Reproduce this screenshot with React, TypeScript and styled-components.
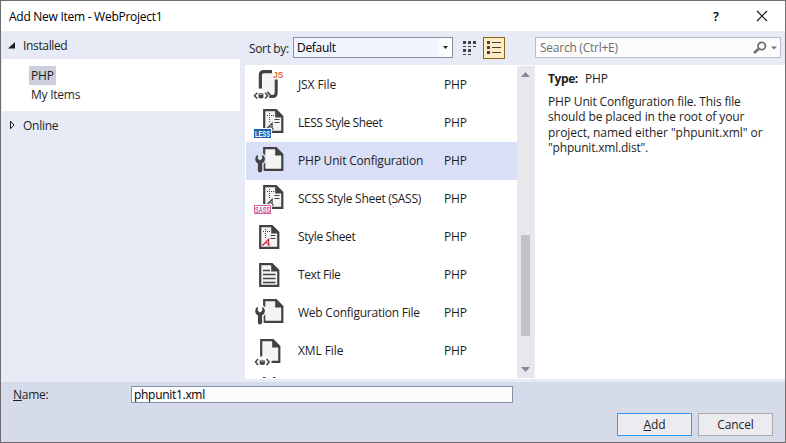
import React from "react";
import styled, { createGlobalStyle } from "styled-components";

const Global = createGlobalStyle`
  * { box-sizing: border-box; }
  body { margin: 0; }
  svg { display: block; flex: none; }
`;

const Dialog = styled.div`
  width: 786px;
  height: 443px;
  display: flex;
  flex-direction: column;
  border: 1px solid #6d6d70;
  background: #e6ebf5;
  color: #1e1e1e;
  font: 12px/15px "Open Sans", "Noto Sans", sans-serif;
  white-space: nowrap;
  overflow: hidden;
`;

const Label = styled.span<{ $track?: number }>`
  letter-spacing: ${(p) => p.$track ?? -0.1}px;
`;

const TitleBar = styled.header`
  height: 30px;
  flex: none;
  display: flex;
  align-items: center;
  justify-content: space-between;
  padding: 0 17px 0 8px;
  background: #fff;
  color: #000;
`;

const WindowActions = styled.div`
  display: flex;
  align-items: center;
  gap: 37px;
`;

const HelpMark = styled.span`
  font-size: 13px;
  font-weight: 600;
`;

const Body = styled.main`
  height: 351px;
  flex: none;
  display: flex;
`;

const Sidebar = styled.nav`
  width: 244px;
  flex: none;
  padding-left: 1px;
`;

const GroupHeader = styled.div`
  height: 28px;
  display: flex;
  align-items: center;
  gap: 8px;
  padding-left: 6px;
`;

const GroupItems = styled.div`
  width: 238px;
  height: 52px;
  display: flex;
  flex-direction: column;
  align-items: flex-start;
  padding: 7px 0 0 27px;
  background: #fff;
`;

const TreeItem = styled.div<{ $selected?: boolean }>`
  height: 19px;
  padding: 2px;
  background: ${(p) => (p.$selected ? "#cccedb" : "transparent")};
`;

const Center = styled.section`
  width: 290px;
  flex: none;
`;

const SortBar = styled.div`
  height: 34px;
  display: flex;
  align-items: flex-start;
  padding: 6px 0 0 4px;
`;

const SortLabel = styled.div`
  width: 44px;
  padding-top: 4px;
`;

const Combo = styled.div`
  width: 160px;
  height: 21px;
  display: flex;
  justify-content: space-between;
  padding-left: 3px;
  line-height: 19px;
  border: 1px solid #8591a2;
  background: #f1f5ff;
  color: #000;
`;

const ComboArrow = styled.div`
  width: 13px;
  display: flex;
  align-items: center;
  justify-content: center;
  background: #fcfcfc;
`;

const ViewButton = styled.div<{ $active?: boolean }>`
  width: 22px;
  height: 22px;
  margin-left: ${(p) => (p.$active ? 2 : 6)}px;
  display: flex;
  align-items: center;
  justify-content: center;
  border: 1px solid ${(p) => (p.$active ? "#8a6414" : "transparent")};
  background: ${(p) => (p.$active ? "#ffecc7" : "transparent")};
`;

const ListPane = styled.div`
  height: 314px;
  display: flex;
  background: #fff;
  border-right: 1px solid #e6ebf5;
`;

const Rows = styled.div`
  width: 272px;
  height: 314px;
  padding: 1px 0 0 1px;
  overflow: hidden;
`;

const Row = styled.div<{ $selected?: boolean }>`
  height: 38px;
  display: grid;
  grid-template-columns: 45px 146px 1fr;
  align-items: center;
  padding-left: 7px;
  background: ${(p) => (p.$selected ? "#dadff8" : "transparent")};

  > span {
    padding-bottom: 2px;
  }
`;

const Scrollbar = styled.div`
  width: 17px;
  height: 312px;
  margin-top: 1px;
  display: flex;
  flex-direction: column;
  align-items: center;
  background: #e8e8ec;
`;

const ScrollArrow = styled.div`
  width: 17px;
  height: 17px;
  flex: none;
  display: flex;
  align-items: center;
  justify-content: center;
`;

const Track = styled.div`
  flex: 1;
  display: flex;
  padding-top: 152px;
`;

const Thumb = styled.div`
  width: 9px;
  height: 101px;
  background: #c2c3c9;
`;

const Details = styled.aside`
  flex: 1;
`;

const SearchRow = styled.div`
  height: 34px;
  padding-top: 6px;
`;

const SearchBox = styled.div`
  width: 246px;
  height: 21px;
  display: flex;
  align-items: center;
  justify-content: space-between;
  padding: 0 3px 0 4px;
  border: 1px solid #b5bccb;
  background: #fcfcfc;
  color: #6d6d6d;
`;

const DetailPane = styled.div`
  height: 314px;
  padding: 6px 0 0 13px;
  background: #fff;
`;

const TypeLine = styled.div`
  height: 23px;
  display: flex;
  gap: 7px;
`;

const Bold = styled.b`
  letter-spacing: -0.4px;
`;

const Description = styled.div`
  line-height: 15.4px;
`;

const Footer = styled.footer`
  flex: 1;
  padding: 4px 12px 0 12px;
  background: #d6dbe9;
`;

const NameRow = styled.div`
  height: 27px;
  display: flex;
  align-items: flex-start;
`;

const NameLabel = styled.label`
  width: 118px;
  padding-top: 1px;
`;

const NameField = styled.div`
  width: 382px;
  height: 17px;
  padding: 0 2px;
  border: 1px solid #8591a9;
  background: #fcfcfc;
  color: #000;
`;

const Buttons = styled.div`
  display: flex;
  justify-content: flex-end;
  gap: 6px;
`;

const Button = styled.button<{ $primary?: boolean }>`
  width: 75px;
  height: 23px;
  padding: 0;
  font: inherit;
  color: #1e1e1e;
  background: #ececf0;
  border: 1px solid ${(p) => (p.$primary ? "#3399ff" : "#acacac")};
`;

const INK = "#424242";

function Page({ x, y, children }: { x: number; y: number; children?: React.ReactNode }) {
  return (
    <g transform={`translate(${x} ${y})`}>
      <path d="M1.2 1.2H13L19.3 7.5V22.8H1.2Z" fill="#f4f4f4" stroke={INK} strokeWidth="2.2" />
      <path d="M12.2 1L20 8.6H12.2Z" fill={INK} />
      {children}
    </g>
  );
}

function StyleMarks({ accent, x = 0 }: { accent: string; x?: number }) {
  return (
    <>
      <path d="M4 6.5H11.5M6.5 4V13" stroke={INK} strokeWidth="1" strokeDasharray="1 1" fill="none" />
      <path d="M11.5 10.5H16.5M11.5 13.5H16.5" stroke={INK} strokeWidth="1.1" />
      <path transform={`translate(${x} 0)`} d="M3 20H5M4 20L9.6 14.2V20M6.3 18H9.6M8.3 20H11.3" stroke={accent} strokeWidth="1.2" fill="none" />
    </>
  );
}

function Wrench({ halo }: { halo: string }) {
  const d = "M2.8 15.8V19.7L5 21.4L7.2 19.7V15.8C9.5 16.8 10.4 19 9.7 21.2C9.3 22.7 8.2 23.7 7.1 24.3V31.5C7.1 34 2.9 34 2.9 31.5V24.3C1.5 23.6.5 22.6.3 21C0 18.7 1 16.7 2.8 15.8Z";
  return (
    <>
      <path d={d} fill={halo} stroke={halo} strokeWidth="3" />
      <path d={d} fill={INK} />
    </>
  );
}

function CodeTag({ y }: { y: number }) {
  return (
    <g transform={`translate(0 ${y})`}>
      <path d="M-1 -2H17.5V9H-1Z" fill="#fff" />
      <path d="M4 .5L1.5 3.5L4 6.5M12.6 .5L15.2 3.5L12.6 6.5" fill="none" stroke={INK} strokeWidth="1.5" />
      <path d="M5.7 2.2Q8.3 .2 10.9 2.2V5.8Q8.3 7.2 5.7 5.8Z" fill={INK} />
      <path d="M6.8 2.5H9.8" stroke="#fff" strokeWidth=".8" />
    </g>
  );
}

function Tag({ width, fill, color, text }: { width: number; fill: string; color: string; text: string }) {
  return (
    <>
      <rect x="0" y="24" width={width + 2} height="11" fill="#fff" />
      <rect x="1" y="25" width={width} height="9" fill={fill} />
      <text x="2" y="32.8" fontFamily="Liberation Sans" fontWeight="bold" fontSize="9" textLength={width - 2} lengthAdjust="spacingAndGlyphs" fill={color}>{text}</text>
    </>
  );
}

type Kind = "jsx" | "less" | "config" | "sass" | "style" | "text" | "xml";

function ItemIcon({ kind, selected }: { kind: Kind; selected?: boolean }) {
  return (
    <svg width="36" height="38" viewBox="0 0 36 38">
      {kind === "jsx" && (
        <>
          <path d="M9.5 7H20V12L22 13V29H16L9.5 23Z" fill="#f5f5f5" />
          <path d="M7.4 22.5V9.2Q7.4 5.7 11 5.7H19" fill="none" stroke={INK} strokeWidth="3.2" />
          <path d="M23.2 13.5V26.5Q23.2 30.6 19.5 30.6H17.5L14 26.2" fill="none" stroke={INK} strokeWidth="3" />
          <text x="20" y="11.7" fontFamily="Liberation Sans" fontWeight="bold" fontSize="9.5" textLength="10.5" lengthAdjust="spacingAndGlyphs" fill="#e86c30">JS</text>
          <g transform="translate(0 26.5)">
            <path d="M4.2 .3L1.5 3.2L4.2 6M12 .3L14.7 3.2L12 6" fill="none" stroke="#fff" strokeWidth="3" />
            <path d="M4.2 .3L1.5 3.2L4.2 6M12 .3L14.7 3.2L12 6" fill="none" stroke={INK} strokeWidth="1.5" />
            <path d="M5.5 1.2Q8 -.4 10.4 1.2V5.2Q8 6.7 5.5 5.2Z" fill={INK} />
            <path d="M6.7 1.8H9.3" stroke="#fff" strokeWidth=".8" />
          </g>
        </>
      )}
      {kind === "less" && (
        <>
          <Page x={10} y={5}><StyleMarks accent={INK} x={-0.5} /></Page>
          <Tag width={17} fill="#1b62ab" color="#fff" text="LESS" />
        </>
      )}
      {kind === "sass" && (
        <>
          <Page x={10} y={5}><StyleMarks accent={INK} x={-0.5} /></Page>
          <Tag width={17} fill="#fff" color="#c2528c" text="SASS" />
          <rect x="1.5" y="25.5" width="16" height="8" fill="none" stroke="#cf649a" strokeWidth="1" />
        </>
      )}
      {kind === "config" && (
        <>
          <Page x={10} y={5} />
          <g transform="translate(2 -3)"><Wrench halo={selected ? "#dadff8" : "#fff"} /></g>
        </>
      )}
      {kind === "style" && <Page x={6} y={7}><StyleMarks accent="#c8283c" /></Page>}
      {kind === "text" && (
        <Page x={6} y={7}>
          <path d="M4 7.5H11M4 11.5H16.5M4 15.5H16.5M4 19.5H16.5" stroke={INK} strokeWidth="1.5" />
        </Page>
      )}
      {kind === "xml" && (
        <>
          <Page x={7} y={7} />
          <g transform="translate(1 0)"><CodeTag y={26.5} /></g>
        </>
      )}
    </svg>
  );
}

const items: { name: string; kind: Kind; track: number; selected?: boolean }[] = [
  { name: "JSX File", kind: "jsx", track: -0.1 },
  { name: "LESS Style Sheet", kind: "less", track: -0.4 },
  { name: "PHP Unit Configuration", kind: "config", track: -0.2, selected: true },
  { name: "SCSS Style Sheet (SASS)", kind: "sass", track: -0.28 },
  { name: "Style Sheet", kind: "style", track: -0.37 },
  { name: "Text File", kind: "text", track: -0.4 },
  { name: "Web Configuration File", kind: "config", track: -0.23 },
  { name: "XML File", kind: "xml", track: -0.1 },
];

export default function App() {
  return (
    <>
      <Global />
      <Dialog>
        <TitleBar>
          <Label $track={-0.27}>Add New Item - WebProject1</Label>
          <WindowActions>
            <HelpMark>?</HelpMark>
            <svg width="12" height="12" viewBox="0 0 12 12"><path d="M1 1L11 11M11 1L1 11" stroke="#111" strokeWidth="1.1" /></svg>
          </WindowActions>
        </TitleBar>
        <Body>
          <Sidebar>
            <GroupHeader>
              <svg width="7" height="7" viewBox="0 0 7 7"><path d="M7 0V6.5H0Z" fill="#1e1e1e" /></svg>
              <Label $track={-0.35}>Installed</Label>
            </GroupHeader>
            <GroupItems>
              <TreeItem $selected><Label>PHP</Label></TreeItem>
              <TreeItem><Label $track={-0.25}>My Items</Label></TreeItem>
            </GroupItems>
            <GroupHeader>
              <svg width="7" height="10" viewBox="0 0 7 10"><path d="M2.5 1.2L6 5L2.5 8.8Z" fill="none" stroke="#1e1e1e" /></svg>
              <Label $track={-0.25}>Online</Label>
            </GroupHeader>
          </Sidebar>
          <Center>
            <SortBar>
              <SortLabel><Label $track={-0.35}>Sort by:</Label></SortLabel>
              <Combo>
                <Label $track={-0.3}>Default</Label>
                <ComboArrow><svg width="5" height="3" viewBox="0 0 5 3"><path d="M0 0H5L2.5 3Z" fill="#1b293e" /></svg></ComboArrow>
              </Combo>
              <ViewButton>
                <svg width="14" height="14" viewBox="0 0 14 14" fill="#424242">
                  <path d="M0 0H3V3H0ZM5 0H8V3H5ZM10 0H13V3H10ZM0 8H3V11H0ZM5 8H8V11H5Z" />
                  <path d="M0 5H3V6H0ZM5 5H8V6H5ZM10 5H13V6H10ZM0 13H3V14H0ZM5 13H8V14H5Z" />
                </svg>
              </ViewButton>
              <ViewButton $active>
                <svg width="14" height="14" viewBox="0 0 14 14" fill="#424242">
                  <path d="M0 0H3V3H0ZM0 5H3V8H0ZM0 10H3V13H0ZM5 1H14V2H5ZM5 6H14V7H5ZM5 11H14V12H5Z" />
                </svg>
              </ViewButton>
            </SortBar>
            <ListPane>
              <Rows>
                {items.map((it) => (
                  <Row key={it.name} $selected={it.selected}>
                    <ItemIcon kind={it.kind} selected={it.selected} />
                    <Label $track={it.track}>{it.name}</Label>
                    <Label>PHP</Label>
                  </Row>
                ))}
                <Row>
                  <svg width="36" height="38" viewBox="0 0 36 38"><path d="M10 7H12.5V8H10ZM20 7H22.5V8H20Z" fill={INK} /></svg>
                </Row>
              </Rows>
              <Scrollbar>
                <ScrollArrow><svg width="9" height="5" viewBox="0 0 9 5"><path d="M0 5L4.5 0L9 5Z" fill="#868999" /></svg></ScrollArrow>
                <Track><Thumb /></Track>
                <ScrollArrow><svg width="9" height="5" viewBox="0 0 9 5"><path d="M0 0L4.5 5L9 0Z" fill="#868999" /></svg></ScrollArrow>
              </Scrollbar>
            </ListPane>
          </Center>
          <Details>
            <SearchRow>
              <SearchBox>
                <Label $track={-0.25}>Search (Ctrl+E)</Label>
                <svg width="24" height="14" viewBox="0 0 24 14">
                  <circle cx="8.7" cy="5" r="3.7" fill="none" stroke="#717171" strokeWidth="1.8" />
                  <path d="M6 7.5L1 12" stroke="#717171" strokeWidth="2.5" />
                  <path d="M18 5.5H24L21 8.5Z" fill="#717171" />
                </svg>
              </SearchBox>
            </SearchRow>
            <DetailPane>
              <TypeLine><Bold>Type:</Bold><Label>PHP</Label></TypeLine>
              <Description>
                <Label $track={-0.15}>PHP Unit Configuration file. This file</Label><br />
                <Label $track={-0.1}>should be placed in the root of your</Label><br />
                <Label $track={-0.05}>project, named either "phpunit.xml" or</Label><br />
                <Label $track={-0.2}>"phpunit.xml.dist".</Label>
              </Description>
            </DetailPane>
          </Details>
        </Body>
        <Footer>
          <NameRow>
            <NameLabel><Label $track={-0.25}><u>N</u>ame:</Label></NameLabel>
            <NameField><Label $track={-0.3}>phpunit1.xml</Label></NameField>
          </NameRow>
          <Buttons>
            <Button $primary><Label><u>A</u>dd</Label></Button>
            <Button><Label>Cancel</Label></Button>
          </Buttons>
        </Footer>
      </Dialog>
    </>
  );
}
